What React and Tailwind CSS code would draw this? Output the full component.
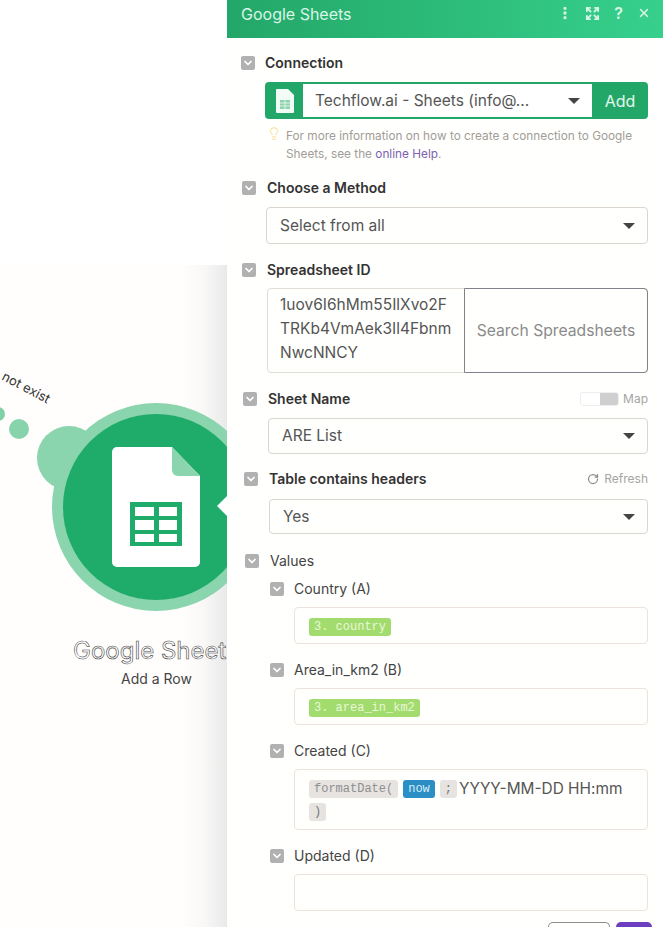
import { Expand, X, EllipsisVertical, ChevronDown, RotateCw, Lightbulb } from 'lucide-react';

function Check({ className = '' }) {
  return (
    <span className={`flex h-[14px] w-[14px] shrink-0 items-center justify-center rounded-[2px] bg-[#b1b1b1] ${className}`}>
      <ChevronDown className="h-3 w-3 text-white" strokeWidth={3.5} />
    </span>
  );
}

function Caret() {
  return <span className="h-0 w-0 border-x-[6px] border-t-[6px] border-x-transparent border-t-[#444]" />;
}

function Label({ children, indent, y, right, gap = 'ml-[11px]' }) {
  return (
    <div className={`flex items-center ${indent} ${y}`}>
      <Check />
      <span className={`${gap} text-[14px] leading-5 font-semibold text-[#333]`}>{children}</span>
      {right}
    </div>
  );
}

function Select({ value, className }) {
  return (
    <div className={`flex items-center justify-between rounded-[4px] border border-[#dcd6d0] pr-[12px] text-[15.5px] text-[#555] ${className}`}>
      <span>{value}</span>
      <Caret />
    </div>
  );
}

function SubField({ label, mt, h = 'h-[37px]', children }) {
  return (
    <div className={mt}>
      <div className="flex h-5 items-center pl-[43px]">
        <Check />
        <span className="ml-[10px] text-[14px] leading-5 text-[#444]">{label}</span>
      </div>
      <div className={`mt-[8px] ml-[67px] flex items-start rounded-[4px] border border-[#eee3dc] px-[14px] pt-[10px] ${h}`}>
        {children}
      </div>
    </div>
  );
}

function Tag({ children, className = 'bg-[#a3dc6e] text-[#e9f7d8]' }) {
  return (
    <span className={`inline-flex h-[18px] items-center rounded-[3px] px-[5px] font-['Liberation_Mono',monospace] text-[12px] ${className}`}>
      {children}
    </span>
  );
}

export default function App() {
  return (
    <div className="flex h-[927px] w-[663px] overflow-hidden bg-white font-['Inter',sans-serif]">
      {/* scenario canvas */}
      <div className="relative h-full w-[227px] shrink-0 overflow-hidden bg-white">
        <div className="absolute top-[265px] right-0 bottom-0 left-0 bg-[#fffefd]" />
        <div className="absolute top-[265px] right-0 bottom-0 w-[46px] bg-gradient-to-r from-transparent via-[#f9f8f7] to-[#e8e9e9]" />
        <span className="absolute top-[378px] left-[0px] rotate-[28deg] text-[13px] whitespace-nowrap text-[#333]">not exist</span>
        <div className="absolute top-[407px] left-[-9px] h-[14px] w-[14px] rounded-full bg-[#7fd0a6]" />
        <div className="absolute top-[419px] left-[9px] h-[20px] w-[20px] rounded-full bg-[#86d3ac]" />
        <div className="absolute top-[426px] left-[37px] h-[64px] w-[64px] rounded-full bg-[#8ad4ae]" />
        <div className="absolute top-[403px] left-[52px] flex h-[208px] w-[208px] items-center justify-center rounded-full bg-[#8ad4ae]">
          <div className="flex h-[186px] w-[186px] items-center justify-center rounded-full bg-[#1fab6a]">
            <svg width="88" height="120" viewBox="0 0 88 120">
              <path d="M5 0H60L88 29V115a5 5 0 0 1-5 5H5a5 5 0 0 1-5-5V5a5 5 0 0 1 5-5Z" fill="#fff" />
              <path d="M60 0L88 29H66a6 6 0 0 1-6-6Z" fill="#8ad4ae" />
              <path d="M18 55H70V99H18Z" fill="#1fab6a" />
              <path d="M23 60H42V69H23ZM47 60H65V69H47ZM23 73H42V83H23ZM47 73H65V83H47ZM23 87H42V95H23ZM47 87H65V95H47Z" fill="#fff" />
            </svg>
          </div>
        </div>
        <div className="absolute top-[496px] right-0 h-0 w-0 border-y-[10px] border-r-[10px] border-y-transparent border-r-white" />
        <span className="absolute top-[636px] left-[73px] text-[24px] leading-[30px] whitespace-nowrap text-white [-webkit-text-stroke:0.6px_#444]">Google Sheets</span>
        <span className="absolute top-[670px] left-[121px] text-[14px] leading-[18px] whitespace-nowrap text-[#444]">Add a Row</span>
      </div>

      {/* module settings panel */}
      <div className="flex h-full min-w-0 flex-1 flex-col bg-[#fffffd]">
        <div className="flex h-[38px] shrink-0 items-start bg-gradient-to-r from-[#23a768] to-[#36d08c] pt-[4px] pl-[14px] text-white">
          <span className="text-[16px] leading-5 text-[#d9f5e6]">Google Sheets</span>
          <div className="ml-auto flex h-[18px] items-center pr-[12px] text-[#d9f5e6]">
            <EllipsisVertical className="h-4 w-4" strokeWidth={3} />
            <Expand className="ml-[12px] h-[15px] w-[15px]" strokeWidth={3} />
            <span className="ml-[14px] text-[16px] leading-4 font-semibold">?</span>
            <X className="ml-[14px] h-[14px] w-[14px]" strokeWidth={2.5} />
          </div>
        </div>

        <div className="min-h-0 flex-1 pr-[15px]">
          <Label indent="pl-[14px]" y="mt-[15px]" gap="ml-[10px]">Connection</Label>
          <div className="mt-[9px] ml-[38px] flex h-[37px] items-stretch rounded-[4px] bg-[#23a768] p-[2px] pr-0">
            <div className="flex w-[36px] shrink-0 items-center justify-center">
              <svg width="18" height="24" viewBox="0 0 18 24">
                <path d="M1 0H12L18 6V23a1 1 0 0 1-1 1H1a1 1 0 0 1-1-1V1a1 1 0 0 1 1-1Z" fill="#f2fbf6" />
                <path d="M4 11H14V20H4Z" fill="#8ad4ae" />
                <path d="M4 14H14M4 17H14M9 11V20" stroke="#f2fbf6" strokeWidth="0.8" />
              </svg>
            </div>
            <div className="flex min-w-0 flex-1 items-center justify-between bg-white pr-[12px] pl-[12px] text-[15.5px] text-[#555]">
              <span>Techflow.ai - Sheets (info@...</span>
              <Caret />
            </div>
            <div className="flex w-[56px] shrink-0 items-center justify-center text-[16px] text-[#e6f8ee]">Add</div>
          </div>
          <div className="mt-[8px] ml-[40px] flex">
            <Lightbulb className="mt-[-1px] h-[15px] w-[14px] shrink-0 text-[#f6d98a]" strokeWidth={1.6} />
            <p className="ml-[5px] text-[11.8px] leading-[18px] text-[#a29c98]">
              For more information on how to create a connection to Google Sheets, see the{' '}
              <span className="text-[#7c5fb0]">online Help</span>.
            </p>
          </div>

          <Label indent="pl-[15px]" y="mt-[15px]">Choose a Method</Label>
          <Select value="Select from all" className="mt-[9px] ml-[39px] h-[37px] pl-[13px]" />

          <Label indent="pl-[15px]" y="mt-[16px]">Spreadsheet ID</Label>
          <div className="mt-[8px] ml-[40px] flex h-[85px] rounded-[4px] border border-[#e2dcd6]">
            <div className="w-[196px] shrink-0 py-[4px] pl-[12px] text-[15.5px] leading-[24px] text-[#555]">
              1uov6I6hMm55IlXvo2F TRKb4VmAek3Il4Fbnm NwcNNCY
            </div>
            <div className="-my-px -mr-px flex flex-1 items-center justify-center rounded-r-[4px] border border-[#85808a] text-[15.7px] text-[#8b8b8b]">
              Search Spreadsheets
            </div>
          </div>

          <Label
            indent="pl-[16px]"
            y="mt-[16px]"
            right={
              <div className="ml-auto flex items-center">
                <span className="flex h-[14px] w-[39px] overflow-hidden rounded-[3px] border border-[#eee]">
                  <span className="w-[19px] bg-white" />
                  <span className="flex-1 bg-[#cfcfcf]" />
                </span>
                <span className="ml-[4px] text-[12px] text-[#a5a5a5]">Map</span>
              </div>
            }
          >
            Sheet Name
          </Label>
          <Select value="ARE List" className="mt-[9px] ml-[41px] h-[36px] pl-[13px]" />

          <Label
            indent="pl-[17px]"
            y="mt-[15px]"
            right={
              <div className="ml-auto flex items-center text-[12px] text-[#a5a5a5]">
                <RotateCw className="mr-[5px] h-[12px] w-[12px] text-[#8a8a8a]" strokeWidth={2.5} />
                Refresh
              </div>
            }
          >
            Table contains headers
          </Label>
          <Select value="Yes" className="mt-[10px] ml-[42px] h-[35px] pl-[13px]" />

          <div className="mt-[17px] flex h-5 items-center pl-[18px]">
            <Check />
            <span className="ml-[11px] text-[14px] leading-5 text-[#444]">Values</span>
          </div>

          <SubField label="Country (A)" mt="mt-[8px]">
            <Tag>3. country</Tag>
          </SubField>
          <SubField label="Area_in_km2 (B)" mt="mt-[16px]">
            <Tag>3. area_in_km2</Tag>
          </SubField>
          <SubField label="Created (C)" mt="mt-[16px]" h="h-[61px]">
            <div className="flex flex-wrap items-center gap-x-[5px] gap-y-[5px]">
              <Tag className="bg-[#e6e3e1] text-[#8f8f8f]">formatDate(</Tag>
              <Tag className="bg-[#2b8fc6] text-[#d8eef8]">now</Tag>
              <Tag className="bg-[#e6e3e1] px-[5px] text-[#777]">;</Tag>
              <span className="ml-[-3px] text-[15.4px] leading-[18px] text-[#555]">YYYY-MM-DD HH:mm</span>
              <Tag className="bg-[#e6e3e1] text-[#777]">)</Tag>
            </div>
          </SubField>
          <SubField label="Updated (D)" mt="mt-[16px]" />
        </div>

        <div className="flex h-[16px] shrink-0 items-start justify-end gap-[6px] pt-[11px] pr-[11px]">
          <div className="h-[8px] w-[62px] rounded-t-[5px] border border-b-0 border-[#8d8d8d]" />
          <div className="h-[8px] w-[36px] rounded-t-[5px] bg-[#6d3fc0]" />
        </div>
      </div>
    </div>
  );
}
